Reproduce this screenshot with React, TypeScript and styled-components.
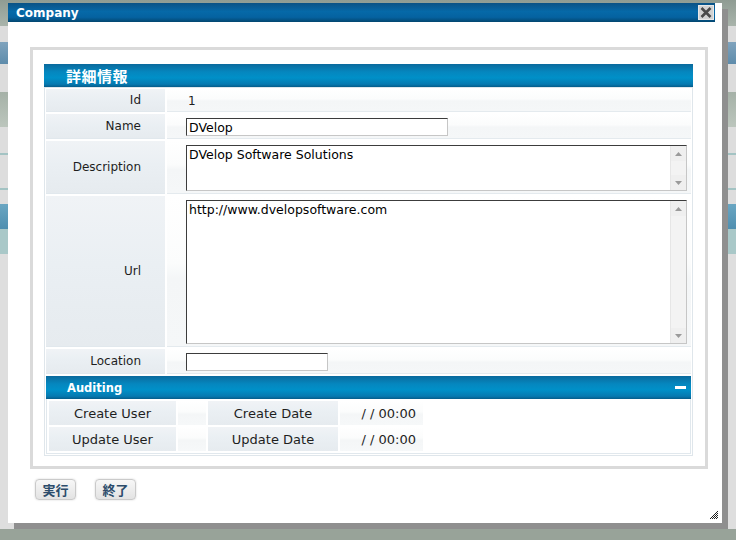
import React from "react";
import styled, { createGlobalStyle } from "styled-components";

// page that sits behind the modal dialog (only its edges show)
const GlobalStyle = createGlobalStyle`
  html, body {
    margin: 0;
    padding: 0;
  }
  body {
    background: #dddddd;
    font-family: "DejaVu Sans", Verdana, sans-serif;
    overflow: hidden;
  }
`;

const Screen = styled.div`
  position: relative;
  width: 736px;
  height: 540px;
  overflow: hidden;
  display: flex;
  flex-direction: column;
  background: #dddddd;
`;

const Band = styled.div<{ $h: number; $bg: string }>`
  height: ${(p) => p.$h}px;
  flex-shrink: 0;
  background: ${(p) => p.$bg};
`;

const bands = [
  { h: 26, bg: "linear-gradient(#8f9c93, #a9b4ab)" },
  { h: 16, bg: "#dcdcdc" },
  { h: 22, bg: "linear-gradient(#7fa3bd, #5e8cab)" },
  { h: 28, bg: "#dcdcdc" },
  { h: 35, bg: "linear-gradient(#a5b1a7, #bcc6bd)" },
  { h: 26, bg: "#dddddd" },
  { h: 2, bg: "#a3c3c3" },
  { h: 33, bg: "#dddddd" },
  { h: 2, bg: "#a3c3c3" },
  { h: 14, bg: "#dddddd" },
  { h: 25, bg: "linear-gradient(#6aa6c2, #4f8fb0)" },
  { h: 25, bg: "#a9c8c8" },
  { h: 275, bg: "#dedede" },
  { h: 11, bg: "#98a399" },
];

// dialog
const Dialog = styled.div`
  position: absolute;
  left: 8px;
  top: 3px;
  width: 714px;
  height: 520px;
  background: #ffffff;
  box-shadow: 6px 6px 0 #8f8f8f;
  display: flex;
  flex-direction: column;
`;

const TitleBar = styled.div`
  width: 707px;
  height: 19px;
  flex-shrink: 0;
  box-sizing: border-box;
  padding: 0 1px 0 8px;
  display: flex;
  align-items: center;
  justify-content: space-between;
  background: linear-gradient(#0a5285, #0669a8 45%, #0562a0 75%, #03466f);
  color: #ffffff;
  font: bold 12px "DejaVu Sans", Verdana, sans-serif;
`;

const CloseButton = styled.div`
  width: 16px;
  height: 15px;
  box-sizing: border-box;
  background: #d2d2d2;
  border: 1px solid #e8e8e8;
  display: flex;
  align-items: center;
  justify-content: center;
`;

const ContentBox = styled.div`
  margin: 25px 14px 0 22px;
  border: 3px solid #dadada;
  padding: 14px 12px 10px 11px;
`;

const Panel = styled.div`
  display: flex;
  flex-direction: column;
`;

const SectionHeader = styled.div<{ $pad: number; $size: number }>`
  height: 23px;
  box-sizing: border-box;
  padding: 0 5px 0 ${(p) => p.$pad}px;
  display: flex;
  align-items: center;
  justify-content: space-between;
  background: linear-gradient(#0a6a9d 0%, #0587bf 35%, #0090c8 60%, #0679b0 88%, #055c8a 100%);
  color: #ffffff;
  font-weight: bold;
  font-size: ${(p) => p.$size}px;
  font-family: "DejaVu Sans", "Noto Sans CJK JP", sans-serif;
`;

const HeaderTitle = styled.span`
  font-family: "Noto Sans CJK JP", "DejaVu Sans", sans-serif;
  letter-spacing: 0.5px;
`;

const Minus = styled.div`
  width: 11px;
  height: 3px;
  background: #ffffff;
`;

const FormGrid = styled.div`
  display: grid;
  grid-template-columns: 119px 1fr;
  gap: 2px;
  padding: 1px;
  border: 1px solid #dfe6eb;
  background: #ffffff;
`;

const LabelCell = styled.div`
  display: flex;
  align-items: center;
  justify-content: flex-end;
  padding-right: 24px;
  min-height: 23px;
  background: linear-gradient(#f0f3f6 0%, #eaeff3 45%, #e6ebef 100%);
  border-bottom: 1px solid #e1e8ed;
  box-sizing: border-box;
  font-size: 12px;
  color: #1e1e1e;
`;

const ValueCell = styled.div`
  display: flex;
  align-items: center;
  padding: 4px 0 2px 19px;
  min-height: 23px;
  box-sizing: border-box;
  background: linear-gradient(#ffffff 0%, #fbfcfc 45%, #f4f6f7 55%, #f5f7f8 100%);
  border-bottom: 1px solid #e4eaee;
  font-size: 12px;
  color: #1e1e1e;
`;

const PlainText = styled.span`
  padding-left: 2px;
`;

const TextInput = styled.input<{ $w: number }>`
  width: ${(p) => p.$w}px;
  height: 18px;
  box-sizing: border-box;
  margin: 0;
  padding: 0 2px;
  border: 1px solid;
  border-color: #3c3c3c #c6c6c6 #c6c6c6 #3c3c3c;
  background: #ffffff;
  font: 12.5px "DejaVu Sans", Verdana, sans-serif;
  color: #000000;
  outline: none;
`;

const TextBox = styled.div<{ $h: number }>`
  width: 501px;
  height: ${(p) => p.$h}px;
  box-sizing: border-box;
  border: 1px solid;
  border-color: #3c3c3c #c6c6c6 #c6c6c6 #3c3c3c;
  background: #ffffff;
  display: flex;
`;

const Area = styled.textarea`
  flex: 1;
  margin: 0;
  border: none;
  padding: 1px 2px;
  resize: none;
  overflow: hidden;
  outline: none;
  font: 12.5px/15px "DejaVu Sans", Verdana, sans-serif;
  color: #000000;
  background: transparent;
`;

const ScrollTrack = styled.div`
  width: 15px;
  flex-shrink: 0;
  background: #f3f3f3;
  border-left: 1px solid #e6e6e6;
  display: flex;
  flex-direction: column;
  justify-content: space-between;
`;

const ScrollArrow = styled.div`
  height: 15px;
  display: flex;
  align-items: center;
  justify-content: center;
  background: #efefef;
`;

const AuditCell = styled.div`
  grid-column: 1 / span 2;
  display: flex;
  flex-direction: column;
`;

const AuditGrid = styled.div`
  display: grid;
  grid-template-columns: 127px 28px 130px 83px;
  grid-auto-rows: 24px;
  gap: 2px;
  padding: 2px;
  border: 1px solid #e1e8ed;
  border-top: none;
  font-size: 13px;
  color: #1e1e1e;
`;

const AuditLabel = styled.div`
  display: flex;
  align-items: center;
  justify-content: center;
  background: linear-gradient(#f0f3f6 0%, #eaeff3 45%, #e6ebef 100%);
`;

const AuditValue = styled.div`
  display: flex;
  align-items: center;
  justify-content: flex-end;
  padding-right: 7px;
  background: linear-gradient(#ffffff 0%, #fbfcfc 45%, #f4f6f7 55%, #f6f8f9 100%);
`;

const ButtonRow = styled.div`
  display: flex;
  gap: 19px;
  margin: 10px 0 0 27px;
`;

const Button = styled.button`
  width: 41px;
  height: 21px;
  padding: 0;
  border: 1px solid #cacaca;
  border-radius: 4px;
  background: linear-gradient(#f7f7f7, #e3e3e3);
  box-shadow: 0 0 2px rgba(0, 0, 0, 0.18);
  color: #2c4c6b;
  font: bold 13px "Noto Sans CJK JP", "DejaVu Sans", sans-serif;
  line-height: 19px;
  cursor: pointer;
`;

const Grip = styled.svg`
  position: absolute;
  right: 4px;
  bottom: 4px;
`;

const Arrow: React.FC<{ up?: boolean }> = ({ up }) => (
  <ScrollArrow>
    <svg width="7" height="4" viewBox="0 0 7 4">
      <path d={up ? "M0 4 L3.5 0 L7 4 Z" : "M0 0 L3.5 4 L7 0 Z"} fill="#9a9a9a" />
    </svg>
  </ScrollArrow>
);

const ScrollText: React.FC<{ value: string; h: number }> = ({ value, h }) => (
  <TextBox $h={h}>
    <Area defaultValue={value} />
    <ScrollTrack>
      <Arrow up />
      <Arrow />
    </ScrollTrack>
  </TextBox>
);

const gripDots = (() => {
  const dots: { x: number; y: number }[] = [];
  for (let y = 0; y < 8; y++) {
    for (let x = 0; x < 8; x++) {
      if (x + y >= 7 && (x + y) % 2 === 1) dots.push({ x, y });
    }
  }
  return dots;
})();

const audits = [
  { user: "Create User", date: "Create Date" },
  { user: "Update User", date: "Update Date" },
];

export default function App() {
  return (
    <Screen>
      <GlobalStyle />
      {bands.map((b, i) => (
        <Band key={i} $h={b.h} $bg={b.bg} />
      ))}

      <Dialog>
        <TitleBar>
          <span>Company</span>
          <CloseButton>
            <svg width="12" height="11" viewBox="0 0 12 11">
              <path d="M1.5 1 L10.5 10 M10.5 1 L1.5 10" stroke="#4a4a4a" strokeWidth="2.6" />
            </svg>
          </CloseButton>
        </TitleBar>

        <ContentBox>
          <Panel>
            <SectionHeader $pad={22} $size={15}>
              <HeaderTitle>詳細情報</HeaderTitle>
            </SectionHeader>
            <FormGrid>
              <LabelCell>Id</LabelCell>
              <ValueCell>
                <PlainText>1</PlainText>
              </ValueCell>

              <LabelCell>Name</LabelCell>
              <ValueCell>
                <TextInput $w={262} defaultValue="DVelop" />
              </ValueCell>

              <LabelCell>Description</LabelCell>
              <ValueCell>
                <ScrollText value="DVelop Software Solutions" h={46} />
              </ValueCell>

              <LabelCell>Url</LabelCell>
              <ValueCell>
                <ScrollText value="http://www.dvelopsoftware.com" h={144} />
              </ValueCell>

              <LabelCell>Location</LabelCell>
              <ValueCell>
                <TextInput $w={142} defaultValue="" />
              </ValueCell>

              <AuditCell>
                <SectionHeader $pad={21} $size={11.5}>
                  <span>Auditing</span>
                  <Minus />
                </SectionHeader>
                <AuditGrid>
                  {audits.map((a) => (
                    <React.Fragment key={a.user}>
                      <AuditLabel>{a.user}</AuditLabel>
                      <AuditValue />
                      <AuditLabel>{a.date}</AuditLabel>
                      <AuditValue>/ / 00:00</AuditValue>
                    </React.Fragment>
                  ))}
                </AuditGrid>
              </AuditCell>
            </FormGrid>
          </Panel>
        </ContentBox>

        <ButtonRow>
          <Button>実行</Button>
          <Button>終了</Button>
        </ButtonRow>

        <Grip width="8" height="8" viewBox="0 0 8 8">
          {gripDots.map((d, i) => (
            <rect key={i} x={d.x} y={d.y} width="1" height="1" fill="#222" />
          ))}
        </Grip>
      </Dialog>
    </Screen>
  );
}
